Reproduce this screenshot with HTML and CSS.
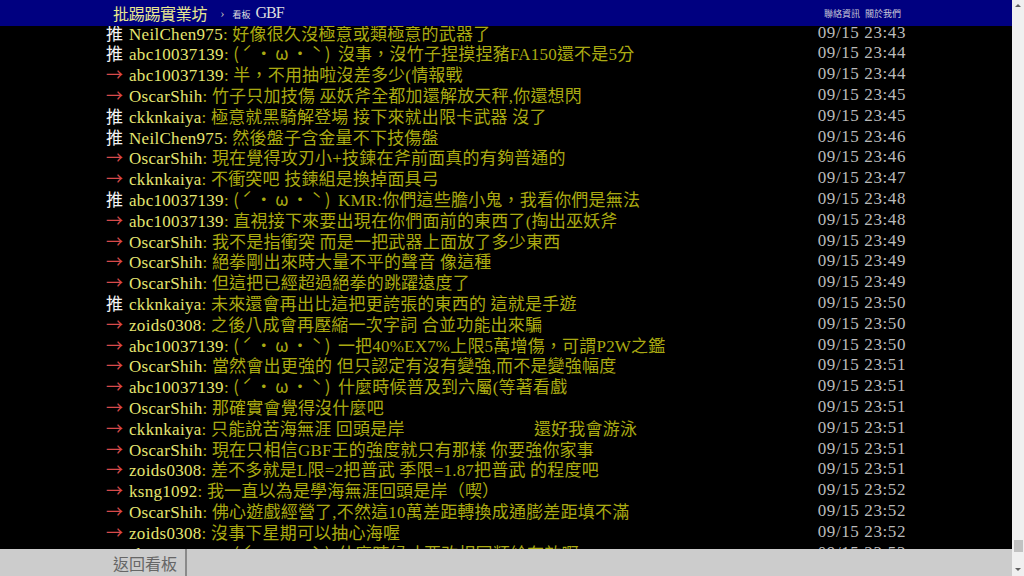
FILE: index.html
```html
<!DOCTYPE html>
<html lang="zh-Hant">

<head>
  <meta charset="UTF-8">
  <title>[閒聊] GBF - 看板 GBF - 批踢踢實業坊</title>
  <link rel="stylesheet" href="styles.css">
</head>

<body>
  <div class="page">
    <div id="topbar-container">
      <div id="topbar">
        <span id="logo">批踢踢實業坊</span>
        <span class="sep">›</span>
        <span class="board"><span class="board-label">看板</span> GBF</span>
        <span class="right-links"><span>聯絡資訊</span><span>關於我們</span></span>
      </div>
    </div>

    <div id="main-container">
      <div class="bbs-screen">
        <div class="push"><span class="hl push-tag">推 </span><span class="push-userid">NeilChen975</span><span class="push-content">: 好像很久沒極意或類極意的武器了</span><span class="push-ipdatetime">09/15 23:43</span></div>
        <div class="push"><span class="hl push-tag">推 </span><span class="push-userid">abc10037139</span><span class="push-content">: <span class="kao">(ˊ・ω・ˋ)</span> 沒事，沒竹子捏摸捏豬FA150還不是5分</span><span class="push-ipdatetime">09/15 23:44</span></div>
        <div class="push"><span class="f1 push-tag">→ </span><span class="push-userid">abc10037139</span><span class="push-content">: 半，不用抽啦沒差多少(情報戰</span><span class="push-ipdatetime">09/15 23:44</span></div>
        <div class="push"><span class="f1 push-tag">→ </span><span class="push-userid">OscarShih</span><span class="push-content">: 竹子只加技傷 巫妖斧全都加還解放天秤,你還想閃</span><span class="push-ipdatetime">09/15 23:45</span></div>
        <div class="push"><span class="hl push-tag">推 </span><span class="push-userid">ckknkaiya</span><span class="push-content">: 極意就黑騎解登場 接下來就出限卡武器 沒了</span><span class="push-ipdatetime">09/15 23:45</span></div>
        <div class="push"><span class="hl push-tag">推 </span><span class="push-userid">NeilChen975</span><span class="push-content">: 然後盤子含金量不下技傷盤</span><span class="push-ipdatetime">09/15 23:46</span></div>
        <div class="push"><span class="f1 push-tag">→ </span><span class="push-userid">OscarShih</span><span class="push-content">: 現在覺得攻刃小+技鍊在斧前面真的有夠普通的</span><span class="push-ipdatetime">09/15 23:46</span></div>
        <div class="push"><span class="f1 push-tag">→ </span><span class="push-userid">ckknkaiya</span><span class="push-content">: 不衝突吧 技鍊組是換掉面具弓</span><span class="push-ipdatetime">09/15 23:47</span></div>
        <div class="push"><span class="hl push-tag">推 </span><span class="push-userid">abc10037139</span><span class="push-content">: <span class="kao">(ˊ・ω・ˋ)</span> KMR:你們這些膽小鬼，我看你們是無法</span><span class="push-ipdatetime">09/15 23:48</span></div>
        <div class="push"><span class="f1 push-tag">→ </span><span class="push-userid">abc10037139</span><span class="push-content">: 直視接下來要出現在你們面前的東西了(掏出巫妖斧</span><span class="push-ipdatetime">09/15 23:48</span></div>
        <div class="push"><span class="f1 push-tag">→ </span><span class="push-userid">OscarShih</span><span class="push-content">: 我不是指衝突 而是一把武器上面放了多少東西</span><span class="push-ipdatetime">09/15 23:49</span></div>
        <div class="push"><span class="f1 push-tag">→ </span><span class="push-userid">OscarShih</span><span class="push-content">: 絕拳剛出來時大量不平的聲音 像這種</span><span class="push-ipdatetime">09/15 23:49</span></div>
        <div class="push"><span class="f1 push-tag">→ </span><span class="push-userid">OscarShih</span><span class="push-content">: 但這把已經超過絕拳的跳躍遠度了</span><span class="push-ipdatetime">09/15 23:49</span></div>
        <div class="push"><span class="hl push-tag">推 </span><span class="push-userid">ckknkaiya</span><span class="push-content">: 未來還會再出比這把更誇張的東西的 這就是手遊</span><span class="push-ipdatetime">09/15 23:50</span></div>
        <div class="push"><span class="f1 push-tag">→ </span><span class="push-userid">zoids0308</span><span class="push-content">: 之後八成會再壓縮一次字詞 合並功能出來騙</span><span class="push-ipdatetime">09/15 23:50</span></div>
        <div class="push"><span class="f1 push-tag">→ </span><span class="push-userid">abc10037139</span><span class="push-content">: <span class="kao">(ˊ・ω・ˋ)</span> 一把40%EX7%上限5萬增傷，可謂P2W之鑑</span><span class="push-ipdatetime">09/15 23:50</span></div>
        <div class="push"><span class="f1 push-tag">→ </span><span class="push-userid">OscarShih</span><span class="push-content">: 當然會出更強的 但只認定有沒有變強,而不是變強幅度</span><span class="push-ipdatetime">09/15 23:51</span></div>
        <div class="push"><span class="f1 push-tag">→ </span><span class="push-userid">abc10037139</span><span class="push-content">: <span class="kao">(ˊ・ω・ˋ)</span> 什麼時候普及到六屬(等著看戲</span><span class="push-ipdatetime">09/15 23:51</span></div>
        <div class="push"><span class="f1 push-tag">→ </span><span class="push-userid">OscarShih</span><span class="push-content">: 那確實會覺得沒什麼吧</span><span class="push-ipdatetime">09/15 23:51</span></div>
        <div class="push"><span class="f1 push-tag">→ </span><span class="push-userid">ckknkaiya</span><span class="push-content">: 只能說苦海無涯 回頭是岸　　　　　　　  還好我會游泳</span><span class="push-ipdatetime">09/15 23:51</span></div>
        <div class="push"><span class="f1 push-tag">→ </span><span class="push-userid">OscarShih</span><span class="push-content">: 現在只相信GBF王的強度就只有那樣 你要強你家事</span><span class="push-ipdatetime">09/15 23:51</span></div>
        <div class="push"><span class="f1 push-tag">→ </span><span class="push-userid">zoids0308</span><span class="push-content">: 差不多就是L限=2把普武 季限=1.87把普武 的程度吧</span><span class="push-ipdatetime">09/15 23:51</span></div>
        <div class="push"><span class="f1 push-tag">→ </span><span class="push-userid">ksng1092</span><span class="push-content">: 我一直以為是學海無涯回頭是岸（喫）</span><span class="push-ipdatetime">09/15 23:52</span></div>
        <div class="push"><span class="f1 push-tag">→ </span><span class="push-userid">OscarShih</span><span class="push-content">: 佛心遊戲經營了,不然這10萬差距轉換成通膨差距填不滿</span><span class="push-ipdatetime">09/15 23:52</span></div>
        <div class="push"><span class="f1 push-tag">→ </span><span class="push-userid">zoids0308</span><span class="push-content">: 沒事下星期可以抽心海喔</span><span class="push-ipdatetime">09/15 23:52</span></div>
        <div class="push"><span class="f1 push-tag">→ </span><span class="push-userid">abc10037139</span><span class="push-content">: <span class="kao">(ˊ・ω・ˋ)</span> 什麼時候才要改相同類給有效啊</span><span class="push-ipdatetime">09/15 23:53</span></div>
      </div>
    </div>

    <div id="action-bar-container">
      <div class="action-bar">
        <span class="btn">返回看板</span>
      </div>
    </div>
  </div>

  <!-- fake scrollbar -->
  <div class="scrollbar">
    <span class="arrow-up"></span>
    <div class="track"><span class="thumb"></span></div>
    <span class="arrow-down"></span>
  </div>
</body>

</html>
```

FILE: styles.css
```css
html,
body {
  margin: 0;
  height: 576px;
  overflow: hidden;
}

body {
  display: flex;
  background-color: #000;
  color: #bbb;
  font-family: 'Liberation Serif', 'Noto Sans CJK TC', serif;
}

.page {
  flex: 1;
  display: flex;
  flex-direction: column;
  min-width: 0;
}

/* top bar */
#topbar-container {
  height: 26px;
  background-color: #000080;
  flex-shrink: 0;
  position: relative;
  z-index: 2;
}

#topbar {
  width: 800px;
  margin: 0 auto;
  height: 26px;
  display: flex;
  align-items: center;
  padding: 0 5px 0 7px;
  box-sizing: border-box;
}

#logo {
  font-family: 'Noto Sans CJK TC', sans-serif;
  font-size: 16px;
  color: #e8e890;
  letter-spacing: -0.3px;
}

.sep {
  color: #bbb;
  font-size: 13px;
  margin: 0 8px 0 13px;
}

.board {
  color: #ddd;
  font-size: 16px;
  letter-spacing: -1px;
}

.board-label {
  font-family: 'Noto Sans CJK TC', sans-serif;
  font-size: 9px;
  letter-spacing: 0;
  margin-right: 2px;
}

.right-links {
  margin-left: auto;
  display: flex;
  gap: 5px;
  font-family: 'Noto Sans CJK TC', sans-serif;
  font-size: 9px;
  color: #c8c8d8;
}

/* comments */
#main-container {
  flex: 1;
  overflow: hidden;
}

.bbs-screen {
  width: 800px;
  margin: -3.4px auto 0;
  font-size: 17px;
  line-height: 20.8px;
}

.push {
  height: 20.8px;
  white-space: pre;
  overflow: hidden;
}

.push-tag {
  display: inline-block;
  width: 23px;
  font-family: 'Noto Sans CJK TC', sans-serif;
}

.push-tag.hl {
  color: #f4f4f4;
}

.push-tag.f1 {
  color: #d84a4a;
}

.push-userid {
  color: #e6e670;
  letter-spacing: 0.3px;
}

.push-content {
  color: #aaaa12;
  letter-spacing: 0.2px;
}

.push-content .kao {
  font-family: 'Noto Sans CJK TC', sans-serif;
  letter-spacing: 3px;
}

.push-ipdatetime {
  float: right;
  color: #bbb;
  letter-spacing: 0.6px;
}

/* bottom bar */
#action-bar-container {
  height: 27px;
  background-color: #ccc;
  flex-shrink: 0;
}

.action-bar {
  width: 800px;
  margin: 0 auto;
  display: flex;
  height: 27px;
}

.btn {
  display: flex;
  align-items: center;
  padding: 0 8px 0 7px;
  border-right: 2px solid #8a8a8a;
  font-family: 'Noto Sans CJK TC', sans-serif;
  font-size: 16px;
  color: #666;
}

/* scrollbar */
.scrollbar {
  width: 12px;
  flex-shrink: 0;
  background-color: #f0f0f0;
  display: flex;
  flex-direction: column;
  align-items: center;
}

.arrow-up,
.arrow-down {
  width: 0;
  height: 0;
  border-left: 3px solid transparent;
  border-right: 3px solid transparent;
}

.arrow-up {
  margin-top: 4px;
  border-bottom: 3px solid #606060;
}

.arrow-down {
  margin-bottom: 5px;
  border-top: 3px solid #606060;
}

.track {
  flex: 1;
  display: flex;
  flex-direction: column;
  justify-content: flex-end;
  padding-bottom: 16px;
}

.thumb {
  width: 9px;
  height: 12px;
  background-color: #c2c2c2;
}
```
